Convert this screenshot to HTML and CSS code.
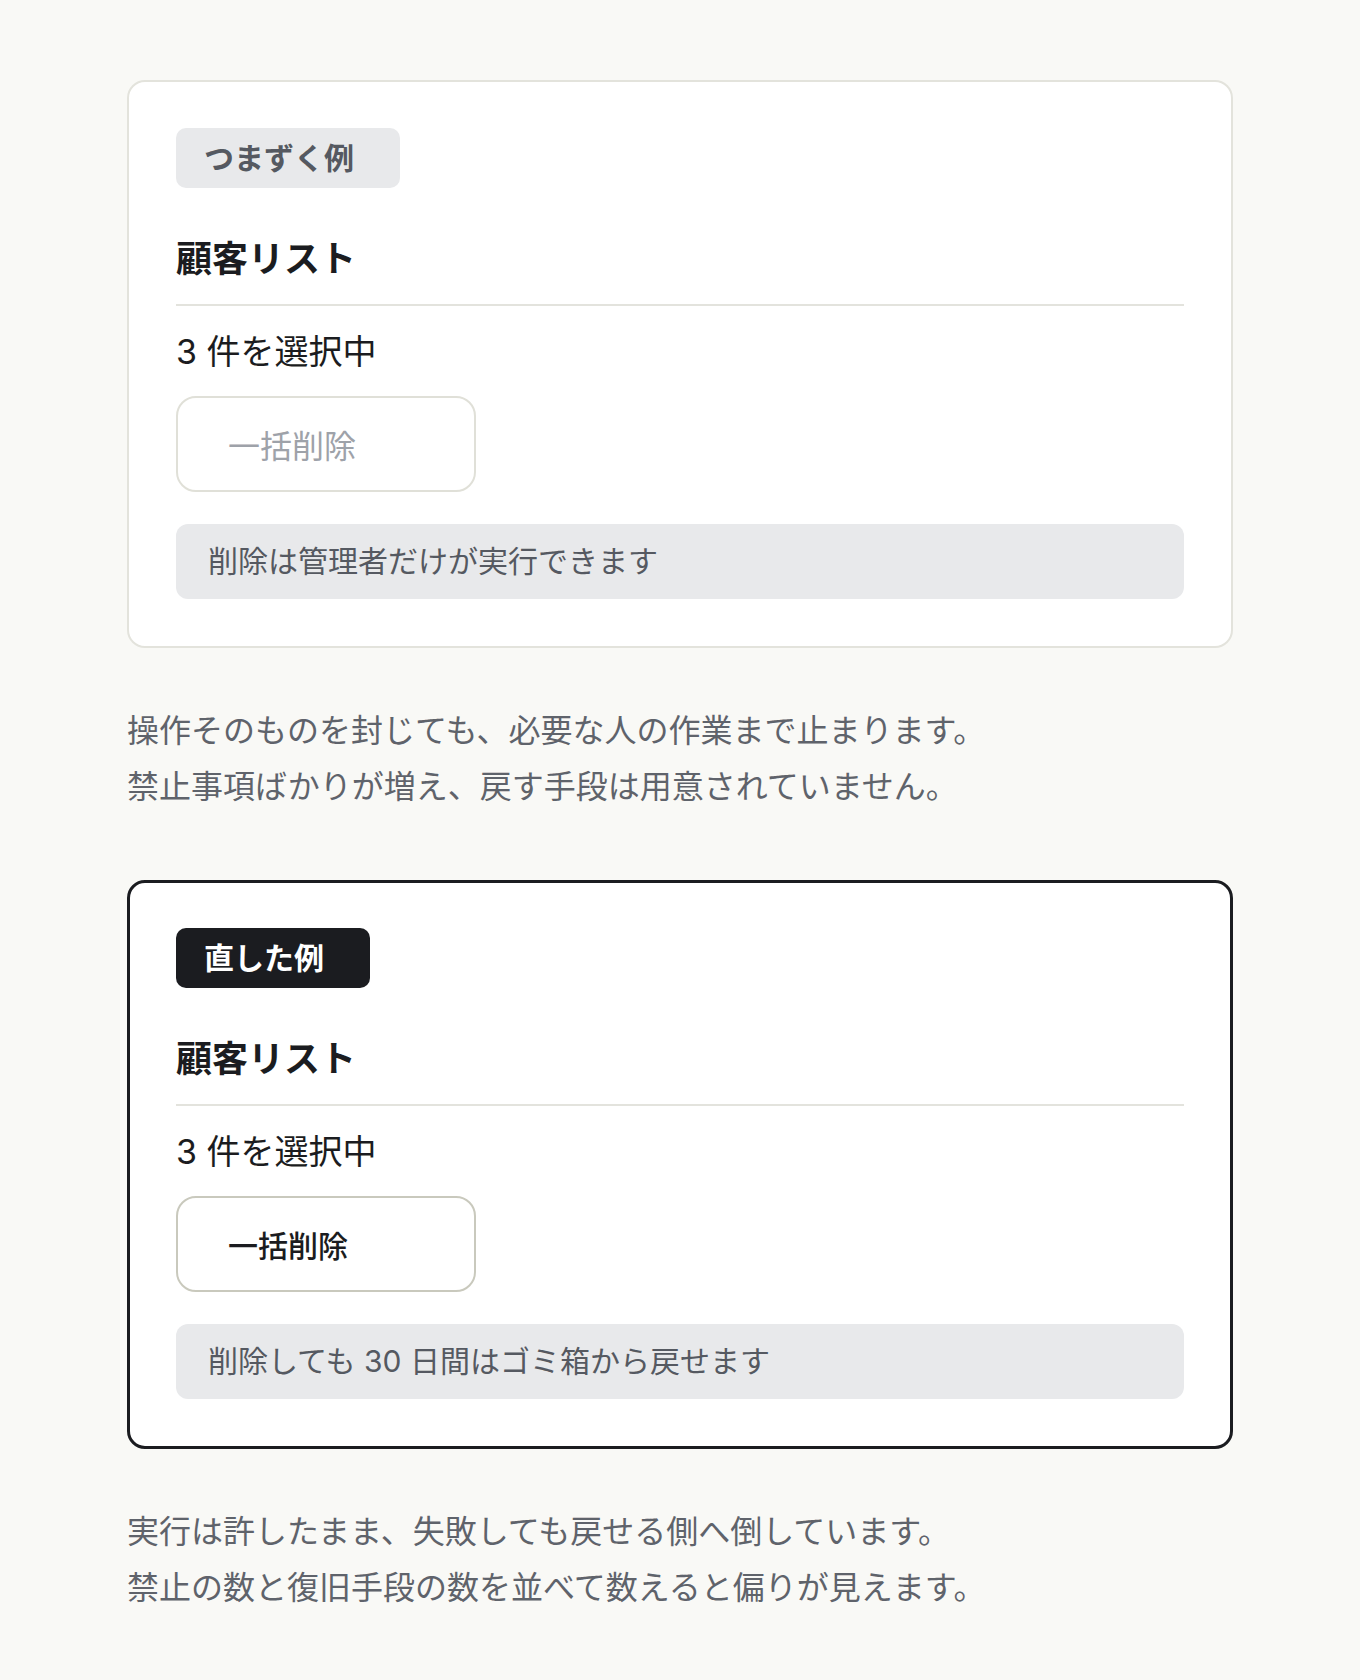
FILE: index.html
```html
<!DOCTYPE html>
<html lang="ja">
<head>
    <meta charset="UTF-8">
    <meta name="viewport" content="width=device-width, initial-scale=1.0">
    <title>一括削除の例</title>
    <link rel="stylesheet" href="styles.css">
</head>
<body>

    <main class="page">
        <section class="example example-bad">
            <span class="tag">つまずく例</span>
            <h3 class="list-title">顧客リスト</h3>
            <p class="count">3 件を選択中</p>
            <button class="bulk" disabled>一括削除</button>
            <p class="note">削除は管理者だけが実行できます</p>
        </section>

        <p class="comment">
            操作そのものを封じても、必要な人の作業まで止まります。<br>
            禁止事項ばかりが増え、戻す手段は用意されていません。
        </p>

        <section class="example example-good">
            <span class="tag">直した例</span>
            <h3 class="list-title">顧客リスト</h3>
            <p class="count">3 件を選択中</p>
            <button class="bulk">一括削除</button>
            <p class="note">削除しても 30 日間はゴミ箱から戻せます</p>
        </section>

        <p class="comment">
            実行は許したまま、失敗しても戻せる側へ倒しています。<br>
            禁止の数と復旧手段の数を並べて数えると偏りが見えます。
        </p>
    </main>

</body>
</html>
```

FILE: styles.css
```css
body {
    margin: 0;
    background-color: #f9f9f6;
    font-family: "Inter", "Noto Sans CJK JP", sans-serif;
    color: #1b1c20;
}
.page {
    width: 1106px;
    margin: 0 auto;
    padding-top: 80px;
}
.example {
    display: flex;
    flex-direction: column;
    align-items: flex-start;
    background: white;
    border: 2px solid #e3e3dc;
    border-radius: 18px;
    padding: 46px 47px 47px;
}
.example-good {
    border: 3px solid #1b1c20;
    padding: 45px 46px 47px;
}
.tag {
    height: 60px;
    line-height: 60px;
    padding: 0 46px 0 28px;
    border-radius: 10px;
    font-size: 30px;
    font-weight: 700;
    background: #e8e9eb;
    color: #555961;
}
.example-good .tag {
    background: #1b1c20;
    color: white;
}
.list-title {
    align-self: stretch;
    margin: 46px 0 0;
    padding-bottom: 20px;
    border-bottom: 2px solid #e3e3dd;
    font-size: 36px;
    line-height: 50px;
    font-weight: 700;
}
.count {
    margin: 22px 0 0;
    font-size: 34px;
    line-height: 48px;
}
.bulk {
    margin-top: 20px;
    width: 300px;
    height: 96px;
    padding: 0 0 0 50px;
    text-align: left;
    background: white;
    border: 2px solid #e0e0d8;
    border-radius: 20px;
    font-family: inherit;
    font-size: 32px;
    color: #9ea2a9;
}
.example-good .bulk {
    border-color: #c9c9bd;
    font-size: 30px;
    font-weight: 500;
    color: #1b1c20;
    cursor: pointer;
}
.note {
    align-self: stretch;
    margin: 32px 0 0;
    padding: 0 32px;
    line-height: 75px;
    border-radius: 12px;
    background: #e8e9eb;
    font-size: 30px;
    color: #555961;
}
.comment {
    margin: 55px 0 65px;
    font-size: 32px;
    line-height: 56px;
    color: #5f636b;
}
```
